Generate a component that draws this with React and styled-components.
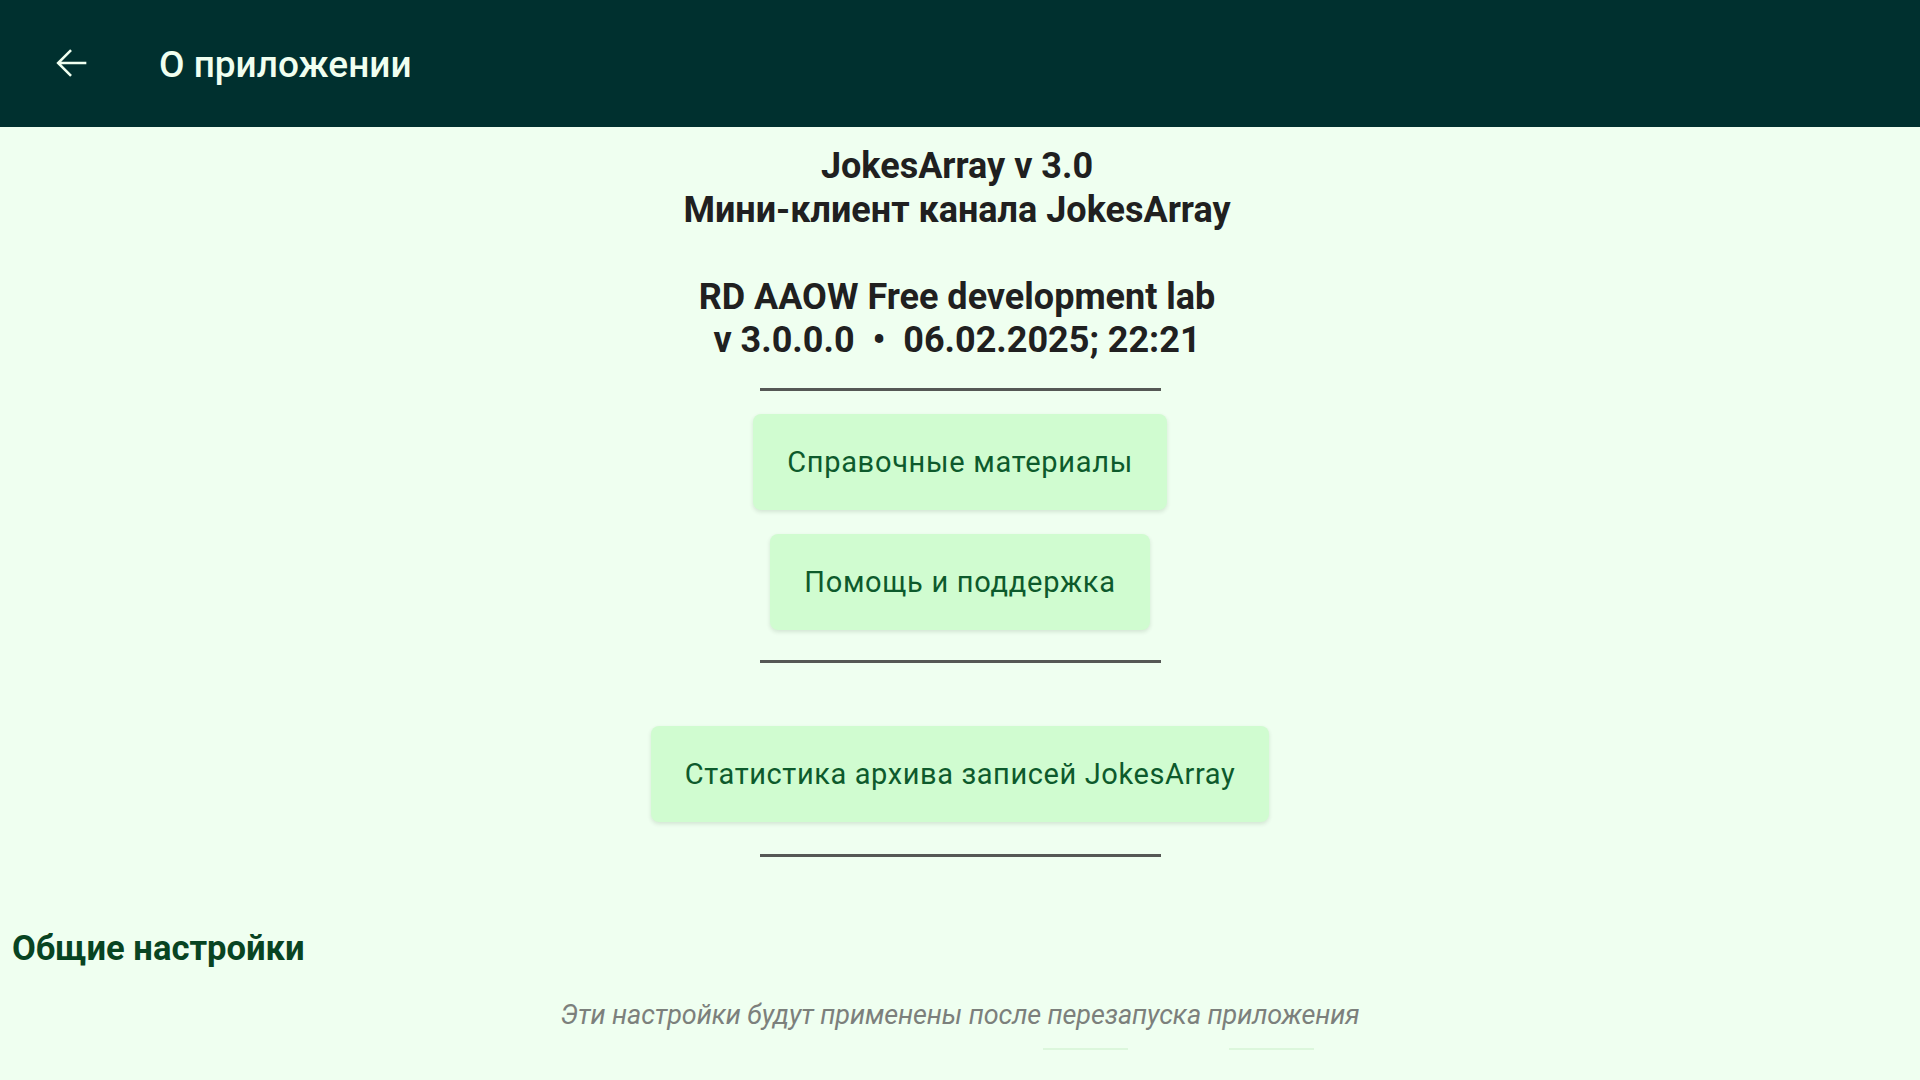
import React from 'react';
import styled, { createGlobalStyle } from 'styled-components';

const GlobalStyle = createGlobalStyle`
  html, body {
    margin: 0;
    padding: 0;
    background-color: #effff0;
    font-family: Roboto, "Noto Sans", "Liberation Sans", sans-serif;
  }
`;

const Page = styled.div`
  width: 1920px;
  height: 1080px;
  overflow: hidden;
  display: flex;
  flex-direction: column;
  background-color: #effff0;
`;

const AppBar = styled.header`
  height: 127px;
  flex-shrink: 0;
  background-color: #00302f;
  display: flex;
  align-items: center;
  padding-left: 48px;
  gap: 65px;
`;

const BackButton = styled.button`
  width: 46px;
  height: 46px;
  padding: 0;
  border: none;
  background: none;
  color: #f0fff0;
  display: flex;
  margin-top: -1px;
  cursor: pointer;
`;

const AppTitle = styled.h1`
  margin: 2px 0 0 0;
  font-size: 37px;
  font-weight: 500;
  color: #f0fff0;
`;

const Content = styled.main`
  display: flex;
  flex-direction: column;
  align-items: center;
  padding-top: 18px;
`;

const InfoText = styled.div`
  font-size: 36px;
  font-weight: 700;
  line-height: 43.5px;
  color: #202020;
  text-align: center;
  margin-left: -6px;
`;

const Divider = styled.hr`
  width: 401px;
  height: 3px;
  border: none;
  margin: ${p => p.$top}px 0 0 0;
  background-color: #555855;
`;

const ActionButton = styled.button`
  height: 96px;
  margin-top: ${p => p.$top}px;
  padding: 0 34px;
  border: none;
  border-radius: 8px;
  background-color: #d0fcd0;
  color: #0d5a2c;
  font-family: Roboto, "Noto Sans", sans-serif;
  font-size: 29px;
  letter-spacing: ${p => (p.$tight ? '0.6px' : '0.7px')};
  box-shadow: 0 2px 4px rgba(0, 40, 0, 0.12);
  cursor: pointer;
`;

const SectionTitle = styled.h2`
  align-self: flex-start;
  margin: 71px 0 0 12px;
  font-size: 34.6px;
  font-weight: 700;
  color: #084422;
`;

const Hint = styled.p`
  margin: 31px 0 0 0;
  font-size: 27px;
  font-style: italic;
  color: #7c807c;
  letter-spacing: -0.1px;
`;

const TrackRow = styled.div`
  align-self: flex-start;
  display: flex;
  gap: 101px;
  margin: 17px 0 0 1043px;
`;

const Track = styled.div`
  width: 85px;
  height: 2px;
  background-color: #dcf7dc;
`;

const ArrowBack = () => (
  <svg width="46" height="46" viewBox="0 0 24 24" fill="currentColor">
    <path d="M20 11.35H6.9l5.6-5.6-0.95-0.95L4.35 12l7.2 7.2 0.95-0.95-5.6-5.6H20v-1.3z" />
  </svg>
);

const App = () => {
  return (
    <Page>
      <GlobalStyle />
      <AppBar>
        <BackButton aria-label="Назад">
          <ArrowBack />
        </BackButton>
        <AppTitle>О приложении</AppTitle>
      </AppBar>

      <Content>
        <InfoText>
          JokesArray v 3.0
          <br />
          Мини-клиент канала JokesArray
          <br />
          <br />
          RD AAOW Free development lab
          <br />
          v 3.0.0.0&nbsp; •&nbsp; 06.02.2025; 22:21
        </InfoText>

        <Divider $top={25} />
        <ActionButton $top={23}>Справочные материалы</ActionButton>
        <ActionButton $top={24}>Помощь и поддержка</ActionButton>
        <Divider $top={30} />
        <ActionButton $top={63} $tight>Статистика архива записей JokesArray</ActionButton>
        <Divider $top={32} />

        <SectionTitle>Общие настройки</SectionTitle>
        <Hint>Эти настройки будут применены после перезапуска приложения</Hint>
        <TrackRow>
          <Track />
          <Track />
        </TrackRow>
      </Content>
    </Page>
  );
};

export default App;
